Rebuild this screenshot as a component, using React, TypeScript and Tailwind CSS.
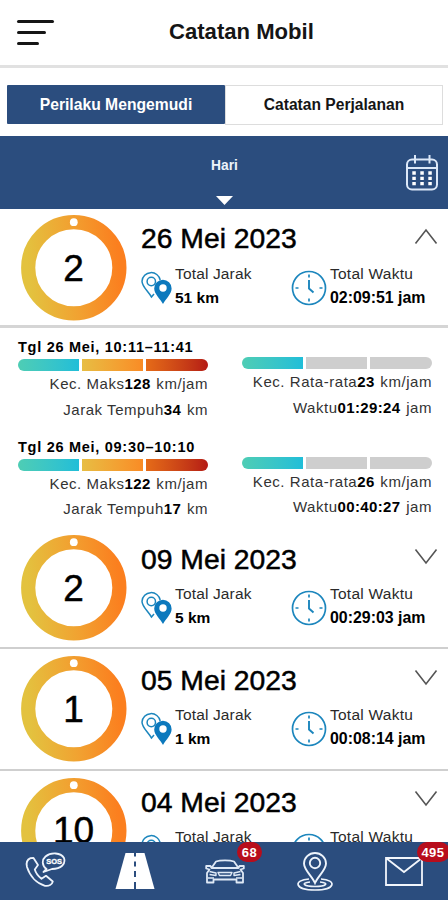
import React from "react";

const BLUE = "#2b4d7e";

function Ring({ id, value }: { id: string; value: string }) {
  return (
    <div className="grid h-[106px] w-[106px] shrink-0 place-items-center">
      <svg className="col-start-1 row-start-1" width="106" height="106" viewBox="0 0 106 106">
        <defs>
          <linearGradient id={id} x1="0" y1="0.55" x2="1" y2="0.45">
            <stop offset="0" stopColor="#e3c23f" />
            <stop offset="0.5" stopColor="#f1a231" />
            <stop offset="1" stopColor="#fb7f1f" />
          </linearGradient>
        </defs>
        <circle cx="52.8" cy="52.8" r="45.6" fill="none" stroke={`url(#${id})`} strokeWidth="14.2" />
        <circle cx="52.8" cy="7.2" r="3.9" fill="#fff" />
      </svg>
      <span className="col-start-1 row-start-1 -ml-[1px] text-[37px] leading-none [-webkit-text-stroke:0.5px_#000]">{value}</span>
    </div>
  );
}

function Pins() {
  return (
    <svg width="32" height="34" viewBox="0 0 32 34" className="shrink-0">
      <path d="M13 23L10.500 26C7 20 1 15.500 1 10.200A9.200 9.200 0 0 1 19.200 9" fill="none" stroke="#1c86bd" strokeWidth="1.500" />
      <circle cx="10.300" cy="10.500" r="4.200" fill="none" stroke="#1c86bd" strokeWidth="1.500" />
      <path d="M22 33C19 27.500 13.200 23 13.200 17.500A8.700 8.700 0 0 1 30.600 17.500C30.600 23 25 27.500 22 33Z" fill="#0c79bd" />
      <circle cx="22" cy="17" r="3.700" fill="#fff" />
    </svg>
  );
}

function Clock() {
  return (
    <svg width="36" height="36" viewBox="0 0 36 36" className="shrink-0">
      <circle cx="18" cy="18" r="16.500" fill="#fff" stroke="#1c86bd" strokeWidth="1.700" />
      <path d="M18 4.500V7.500M18 28.500V31.500M4.500 18H7.500M28.500 18H31.500" fill="none" stroke="#1c86bd" strokeWidth="1.700" />
      <path d="M18 10V18.500L22.500 22.500" fill="none" stroke="#1c86bd" strokeWidth="1.900" />
    </svg>
  );
}

function Day({ id, count, date, distance, time, open = false }: {
  id: string; count: string; date: string; distance: string; time: string; open?: boolean;
}) {
  return (
    <section className={`flex shrink-0 items-start pl-[21px] ${open ? "h-[119px] border-b-[3px] border-[#d5d5d5] pt-[6px]" : "h-[121.300px] border-b-2 border-[#cfcfcf] pt-[7px]"}`}>
      <Ring id={id} value={count} />
      <div className={`ml-[14px] flex flex-1 flex-col ${open ? "pt-[7px]" : "pt-[8px]"}`}>
        <div className="flex h-[32px] items-center">
          <h2 className="w-[270px] whitespace-nowrap text-[28.300px] leading-[32px] [-webkit-text-stroke:0.500px_#000]">{date}</h2>
          <svg width="26" height="18" viewBox="0 0 26 18" className={`ml-[2px] ${open ? "-mt-[2px]" : "-mt-[7px] rotate-180"}`}>
            <path d="M2.500 15.500L13 2L23.500 15.500" fill="none" stroke="#555" strokeWidth="1.600" />
          </svg>
        </div>
        <div className={`flex ${open ? "pt-[8px]" : "pt-[7px]"}`}>
          <div className="pt-[9px]"><Pins /></div>
          <div className="ml-[2px] w-[115px] whitespace-nowrap">
            <p className="h-[24px] text-[15.500px] leading-[24px] tracking-[0.150px] text-[#2a2a2a]">Total Jarak</p>
            <p className="h-[24px] text-[15.500px] font-bold leading-[24px]">{distance}</p>
          </div>
          <div className="pl-[1px] pt-[8px]"><Clock /></div>
          <div className="ml-[3px] whitespace-nowrap">
            <p className="h-[24px] text-[15.500px] leading-[24px] tracking-[0.250px] text-[#2a2a2a]">Total Waktu</p>
            <p className="h-[24px] text-[15.900px] font-bold leading-[24px]">{time}</p>
          </div>
        </div>
      </div>
    </section>
  );
}

function SpeedBar({ full = false }: { full?: boolean }) {
  return (
    <div className="flex h-[12px] w-[189.500px] gap-[3px] overflow-hidden rounded-full">
      <div className="flex-1 bg-gradient-to-r from-[#4ecdb4] to-[#20bed8]" />
      <div className={`flex-1 ${full ? "bg-gradient-to-r from-[#e7bd43] to-[#f98b25]" : "bg-[#cecece]"}`} />
      <div className={`flex-1 ${full ? "bg-gradient-to-r from-[#e56b18] to-[#b51915]" : "bg-[#cecece]"}`} />
    </div>
  );
}

function Metric({ label, value, unit }: { label: string; value: string; unit: string }) {
  return (
    <p className="-mr-[1px] h-[25.500px] whitespace-nowrap text-right text-[15px] leading-[25.500px] tracking-[0.550px] text-[#333]">
      {label}<b className="mr-[1px] tracking-[0.350px] text-black">{value}</b> {unit}
    </p>
  );
}

function Trip({ title, max, distance, avg, time }: {
  title: string; max: string; distance: string; avg: string; time: string;
}) {
  return (
    <section className="flex h-[99.500px] shrink-0 px-[18px]">
      <div className="w-[189px]">
        <h3 className="mb-[2px] h-[20px] whitespace-nowrap text-[14.500px] font-bold leading-[20px] tracking-[0.720px]">{title}</h3>
        <SpeedBar full />
        <Metric label="Kec. Maks" value={max} unit="km/jam" />
        <Metric label="Jarak Tempuh" value={distance} unit="km" />
      </div>
      <div className="ml-[35px] w-[189px] pt-[20px]">
        <SpeedBar />
        <Metric label="Kec. Rata-rata" value={avg} unit="km/jam" />
        <Metric label="Waktu" value={time} unit="jam" />
      </div>
    </section>
  );
}

function Footer() {
  return (
    <nav className="flex h-[58px] shrink-0 items-start bg-[#2b4d7e] pt-[10px]">
      <div className="flex w-[90px] justify-center">
        <svg width="42" height="38" viewBox="0 0 42 38" fill="none" stroke="#eef4fc" strokeWidth="1.800" strokeLinejoin="round" strokeLinecap="round">
          <path d="M6.500 6.200C3.500 7.500 2 11 3 15C6 24.500 13 31.500 21 33.800C25 34.500 28 32.500 28.800 29.500L22 23.800L17.500 26.800C14 24 11.800 21 10.800 17.500L14 13L9.500 6Z" />
          <path d="M22.500 17C18 14 17.500 8 21.500 4.500C27 0 37 0.500 40 6C42 12 37 17 28 17L19.500 20Z" />
          <text x="30.200" y="11.700" textAnchor="middle" fill="#fff" stroke="#fff" strokeWidth="0.300" fontSize="7.500" fontWeight="bold" fontFamily="Liberation Sans">SOS</text>
        </svg>
      </div>
      <div className="flex w-[90px] justify-center">
        <svg width="40" height="38" viewBox="0 0 40 38">
          <path d="M10.500 1H29.500L39.500 37H.500Z" fill="#fff" />
          <path d="M20 1V4.500M20 9.500V14.500M20 19V25M20 30V37" stroke={BLUE} strokeWidth="2" />
        </svg>
      </div>
      <div className="flex w-[90px] justify-center">
        <div className="relative mt-[7px]">
          <svg width="40" height="25" viewBox="0 0 40 25" fill="none" stroke="#dfe9f6" strokeWidth="1.800" strokeLinejoin="round">
            <path d="M6.500 9L11 2.500C15 1 25 1 29 2.500L33.500 9M6.500 9L5.500 7H1.200V9.500L4.500 10.500L2 14V23.500H8.500V20.500H31.500V23.500H38V14L35.500 10.500L38.800 9.500V7H34.500L33.500 9Z" />
            <path d="M4.500 12.500L11 14V16.500L4.500 15.500M35.500 12.500L29 14V16.500L35.500 15.500M13 13.500H27L25.500 16.500H14.500ZM3 19H9M31 19H37" strokeWidth="1.400" />
          </svg>
          <span className="absolute -top-[17px] left-[32px] flex h-[20px] w-[25px] items-center justify-center rounded-full bg-[#b80d1c] text-[13px] font-bold leading-none tracking-[0.500px] text-white">68</span>
        </div>
      </div>
      <div className="flex w-[89px] justify-center">
        <svg width="38" height="40" viewBox="0 0 38 40" fill="none" stroke="#eef4fc" strokeWidth="1.900">
          <path d="M19 31C16 24 8 18 8 11.500A11 10.500 0 0 1 30 11.500C30 18 22 24 19 31Z" />
          <circle cx="19" cy="11" r="5.200" />
          <path d="M13 27C-3 28 -2 38 19 38C40 38 41 28 25 27M14 30C4 31 8 34.500 19 34.500C30 34.500 34 31 24 30" strokeWidth="1.600" />
        </svg>
      </div>
      <div className="flex w-[89px] justify-center">
        <div className="relative mt-[5px] h-[29px] w-[38px]">
          <svg width="38" height="29" viewBox="0 0 38 29" fill="none" stroke="#f2f6fc" strokeWidth="1.800">
            <path d="M1 1H37V28H1ZM1 1L19 15L37 1" />
          </svg>
          <span className="absolute -top-[15px] left-[32px] flex h-[20px] w-[33px] items-center justify-center rounded-full bg-[#b80d1c] text-[13px] font-bold leading-none tracking-[0.500px] text-white">495</span>
        </div>
      </div>
    </nav>
  );
}

export default function App() {
  return (
    <div className="flex h-[900px] w-[448px] flex-col overflow-hidden bg-white font-['Liberation_Sans',sans-serif] text-black">
      <header className="flex h-[68px] shrink-0 items-center border-b-[3px] border-[#e1e1e1] pl-[17px]">
        <div className="flex w-[152px] flex-col gap-[8px] pb-[1px]">
          <i className="h-[3px] w-[37px] rounded-full bg-[#161616]" />
          <i className="h-[3px] w-[29px] rounded-full bg-[#161616]" />
          <i className="h-[3px] w-[22px] rounded-full bg-[#161616]" />
        </div>
        <h1 className="whitespace-nowrap text-[22.100px] font-bold leading-none text-[#151515]">Catatan Mobil</h1>
      </header>
      <div className="flex h-[68px] shrink-0 pl-[7px] pt-[17px]">
        <div className="flex h-[39px] w-[218px] items-center justify-center rounded-[1px] bg-[#2b4d7e] text-[15.700px] font-bold text-white">Perilaku Mengemudi</div>
        <div className="flex h-[40px] w-[218px] items-center justify-center border border-[#ddd] text-[15.600px] font-bold text-[#151515]">Catatan Perjalanan</div>
      </div>
      <div className="grid h-[73px] shrink-0 grid-cols-[1fr_80px_1fr] bg-[#2b4d7e]">
        <div />
        <div className="flex flex-col items-center pt-[22px]">
          <span className="pl-[1px] text-[13.800px] font-bold leading-[16px] text-[#edf3fb]">Hari</span>
          <svg className="mt-[22px]" width="17" height="9" viewBox="0 0 17 9"><path d="M0 0H17L8.500 9Z" fill="#fff" /></svg>
        </div>
        <div className="flex justify-end pr-[10px] pt-[19px]">
          <svg width="32" height="36" viewBox="0 0 32 36" fill="none" stroke="#dce8f8" strokeWidth="2">
            <rect x="1" y="4.500" width="30" height="30" rx="5" />
            <path d="M1 13H31M9 0V8.500M23.500 0V8.500" />
            <path d="M6.300 18H25.800M6.300 23.300H25.800M6.300 28.600H25.800" stroke="#fff" strokeWidth="3.300" strokeDasharray="3.500 4.500" />
          </svg>
        </div>
      </div>
      <main className="flex min-h-0 flex-1 flex-col overflow-hidden">
        <Day id="ring-a" count="2" date="26 Mei 2023" distance="51 km" time="02:09:51 jam" open />
        <div className="h-[200px] shrink-0 pt-[9px]">
          <Trip title="Tgl 26 Mei, 10:11–11:41" max="128" distance="34" avg="23" time="01:29:24" />
          <Trip title="Tgl 26 Mei, 09:30–10:10" max="122" distance="17" avg="26" time="00:40:27" />
        </div>
        <Day id="ring-b" count="2" date="09 Mei 2023" distance="5 km" time="00:29:03 jam" />
        <Day id="ring-c" count="1" date="05 Mei 2023" distance="1 km" time="00:08:14 jam" />
        <Day id="ring-d" count="10" date="04 Mei 2023" distance="" time="" />
      </main>
      <Footer />
    </div>
  );
}
